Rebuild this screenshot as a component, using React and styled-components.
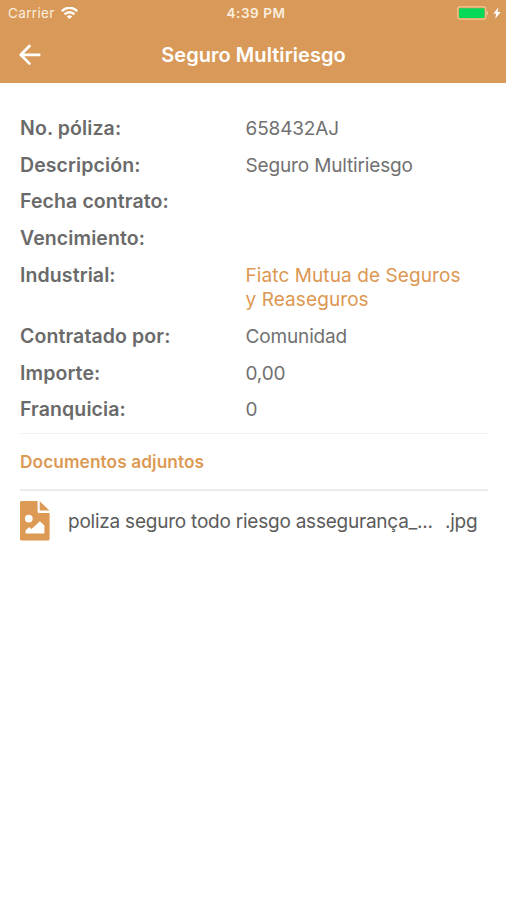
import React from "react";
import styled, { createGlobalStyle } from "styled-components";

const ACCENT = "#d99a59";

const GlobalStyle = createGlobalStyle`
  * { box-sizing: border-box; }
  body {
    margin: 0;
    background: #fff;
    font-family: Inter, "Liberation Sans", sans-serif;
    color: #6a6a6a;
  }
`;

const Screen = styled.div`
  width: 506px;
  height: 900px;
  overflow: hidden;
  background: #fff;
`;

const Header = styled.header`
  height: 83px;
  background: ${ACCENT};
  color: #fff;
`;

const StatusBar = styled.div`
  height: 26px;
  padding: 0 5px 0 8px;
  display: grid;
  grid-template-columns: 1fr auto 1fr;
  align-items: center;
  font-size: 13.5px;
  line-height: 27px;
  color: #fbeedf;
`;

const Carrier = styled.div`
  display: flex;
  align-items: center;
  gap: 6px;
  letter-spacing: 0.35px;
`;

const Clock = styled.div`
  font-weight: 600;
  font-size: 13.5px;
  letter-spacing: 0.55px;
  padding-left: 3px;
`;

const Power = styled.div`
  display: flex;
  align-items: center;
  justify-content: flex-end;
  gap: 4px;
  padding-bottom: 1px;
`;

const NavBar = styled.div`
  height: 57px;
  padding: 0 18px;
  display: grid;
  grid-template-columns: 24px 1fr 24px;
  align-items: center;
`;

const BackButton = styled.button`
  width: 24px;
  height: 24px;
  padding: 0;
  border: 0;
  background: none;
  color: #fff;
  display: flex;
  align-items: center;
  justify-content: center;
`;

const Title = styled.h1`
  margin: 0;
  padding-left: 1px;
  font-size: 20px;
  font-weight: 600;
  line-height: 26px;
  letter-spacing: 0.05px;
  text-align: center;
`;

const Content = styled.main`
  padding: 34px 18.5px 0 20px;
`;

const Details = styled.dl`
  margin: 0;
  padding-bottom: 10.3px;
  display: grid;
  grid-template-columns: 225.5px 1fr;
  row-gap: 12.2px;
  font-size: 19px;
  line-height: 24.5px;
  border-bottom: 1.5px solid #f1f1f1;
`;

const Label = styled.dt`
  font-size: 19.5px;
  line-height: 23px;
  font-weight: 600;
  letter-spacing: 0.1px;
`;

const Value = styled.dd`
  margin: 0;
  min-height: 24.5px;
  white-space: pre-line;
  color: ${(p) => (p.$accent ? "#dc9752" : "#717171")};
  letter-spacing: ${(p) => (p.$accent ? 0.09 : -0.15)}px;
`;

const SectionTitle = styled.h2`
  margin: 0;
  height: 57px;
  line-height: 55.5px;
  font-size: 17.3px;
  font-weight: 600;
  letter-spacing: 0.08px;
  color: #dc9a55;
  border-bottom: 2px solid #ebebeb;
`;

const Attachment = styled.div`
  height: 60px;
  display: grid;
  grid-template-columns: 48px 377px 1fr;
  align-items: center;
  font-size: 19px;
  color: #5b5b5b;
`;

const FileName = styled.span`
  white-space: nowrap;
  letter-spacing: -0.23px;
`;

const rows = [
  { label: "No. póliza:", value: "658432AJ" },
  { label: "Descripción:", value: "Seguro Multiriesgo" },
  { label: "Fecha contrato:", value: "" },
  { label: "Vencimiento:", value: "" },
  { label: "Industrial:", value: "Fiatc Mutua de Seguros\ny Reaseguros", accent: true },
  { label: "Contratado por:", value: "Comunidad" },
  { label: "Importe:", value: "0,00" },
  { label: "Franquicia:", value: "0" },
];

const WifiIcon = () => (
  <svg width="17" height="13" viewBox="0 0 17 13" fill="none" stroke="#fff" strokeWidth="2.4">
    <path d="M0.8 4.2C5 -0.3 12 -0.3 16.2 4.2" />
    <path d="M3.6 7.4C6.3 4.5 10.7 4.5 13.4 7.4" />
    <path d="M8.5 12.1L5.8 9.4C7.3 8 9.7 8 11.2 9.4Z" fill="#fff" stroke="none" />
  </svg>
);

const BatteryIcon = () => (
  <svg width="32" height="14" viewBox="0 0 32 14">
    <rect x="0.75" y="0.75" width="28" height="12.5" rx="2.5" fill="none" stroke="#edc08a" strokeWidth="1.3" />
    <rect x="2" y="2.2" width="25.5" height="9.8" rx="1" fill="#06d957" />
    <path d="M29.5 4.2Q32.4 7 29.5 9.8Z" fill="#f1d2aa" />
  </svg>
);

const BoltIcon = () => (
  <svg width="8" height="12" viewBox="0 0 8 12" fill="#fff">
    <path d="M5.4 0.3L0.4 6.8H3.2L2.2 11.7L7.7 4.9H4.6Z" />
  </svg>
);

const BackArrow = () => (
  <svg width="24" height="24" viewBox="0 0 24 24" fill="none" stroke="#fff" strokeWidth="2.7" strokeLinecap="round" strokeLinejoin="round">
    <path d="M21.3 11.8H3M11.5 3L2.7 11.8L11.5 20.6" />
  </svg>
);

const FileImageIcon = () => (
  <svg width="30" height="41" viewBox="0 0 30 41" fill="#dc9a55">
    <path
      fillRule="evenodd"
      d="M1.5 0H17.6V10.5Q17.6 12 19.1 12H29.6V38Q29.6 39.6 28 39.6H1.5Q0 39.6 0 38V1.5Q0 0 1.5 0ZM5.6 32.4H24.4V24.5L20.4 20.8Q19.9 20.4 19.4 20.8L11.5 28L9.7 26.4Q9.2 26 8.7 26.4L5.6 29.3ZM8.8 13.7A3.9 3.9 0 1 0 8.8 21.5A3.9 3.9 0 1 0 8.8 13.7Z"
    />
    <path d="M19.7 0.2L29.5 9.6H19.7Z" />
  </svg>
);

export default function App() {
  return (
    <Screen>
      <GlobalStyle />
      <Header>
        <StatusBar>
          <Carrier>
            Carrier
            <WifiIcon />
          </Carrier>
          <Clock>4:39 PM</Clock>
          <Power>
            <BatteryIcon />
            <BoltIcon />
          </Power>
        </StatusBar>
        <NavBar>
          <BackButton aria-label="Volver">
            <BackArrow />
          </BackButton>
          <Title>Seguro Multiriesgo</Title>
        </NavBar>
      </Header>
      <Content>
        <Details>
          {rows.map((row) => (
            <React.Fragment key={row.label}>
              <Label>{row.label}</Label>
              <Value $accent={row.accent}>{row.value}</Value>
            </React.Fragment>
          ))}
        </Details>
        <SectionTitle>Documentos adjuntos</SectionTitle>
        <Attachment>
          <FileImageIcon />
          <FileName>poliza seguro todo riesgo assegurança_...</FileName>
          <FileName>.jpg</FileName>
        </Attachment>
      </Content>
    </Screen>
  );
}
